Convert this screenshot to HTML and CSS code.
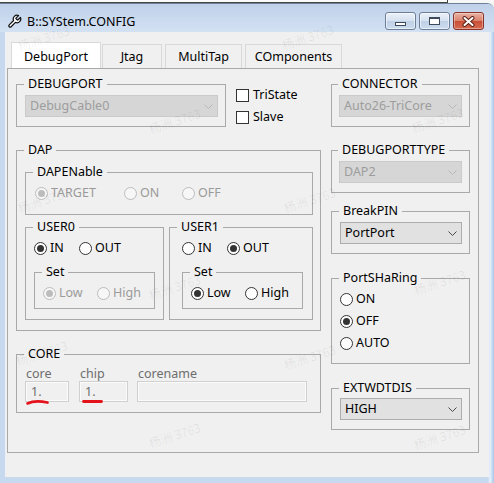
FILE: index.html
```html
<!DOCTYPE html>
<html lang="en">
<head>
<meta charset="utf-8">
<title>B::SYStem.CONFIG</title>
<link rel="stylesheet" href="styles.css">
</head>
<body>
<div class="screen">
  <div class="behind"><div class="behind-edge"></div></div>
  <div class="window">
    <div class="titlebar">
      <svg class="app-icon" width="15" height="15" viewBox="0 0 24 24"><path d="M14.7 6.3a1 1 0 0 0 0 1.4l1.6 1.6a1 1 0 0 0 1.4 0l3.77-3.77a6 6 0 0 1-7.940 7.94l-6.91 6.91a2.12 2.12 0 0 1-3-3l6.91-6.91a6 6 0 0 1 7.94-7.94l-3.76 3.76z" fill="#fff" stroke="#111" stroke-width="2" stroke-linejoin="round"/></svg>
      <span class="title">B::SYStem.CONFIG</span>
      <div class="caption">
        <div class="cbtn"><span class="g-min"></span></div>
        <div class="cbtn"><span class="g-max"></span></div>
        <div class="cbtn close"><svg width="13" height="11" viewBox="0 0 13 11"><path d="M2.5 2 L10.5 9 M10.5 2 L2.5 9" stroke="#5a2218" stroke-width="4" stroke-linecap="round"/><path d="M2.5 2 L10.5 9 M10.5 2 L2.5 9" stroke="#fff" stroke-width="2" stroke-linecap="round"/></svg></div>
      </div>
    </div>
    <div class="client">
      <div class="tabs">
        <div class="tab active w-debug">DebugPort</div>
        <div class="tab w-jtag">Jtag</div>
        <div class="tab w-multi">MultiTap</div>
        <div class="tab w-comp">COmponents</div>
      </div>
      <div class="panel">
        <div class="col-left">
          <div class="row-top">
            <fieldset class="group g-debugport">
              <legend>DEBUGPORT</legend>
              <div class="combo disabled"><span>DebugCable0</span><svg class="chev" width="9" height="5" viewBox="0 0 9 5"><polyline points="0.5,0.5 4.5,4.5 8.5,0.5" fill="none" stroke="currentColor" stroke-width="1"/></svg></div>
            </fieldset>
            <div class="checks">
              <div class="check"><span class="box"></span>TriState</div>
              <div class="check"><span class="box"></span>Slave</div>
            </div>
          </div>

          <fieldset class="group g-dap">
            <legend>DAP</legend>
            <fieldset class="group g-dapenable">
              <legend>DAPENable</legend>
              <div class="radios indent1">
                <div class="radio disabled checked w89"><span class="circle"></span>TARGET</div>
                <div class="radio disabled w58"><span class="circle"></span>ON</div>
                <div class="radio disabled"><span class="circle"></span>OFF</div>
              </div>
            </fieldset>
            <div class="user-row">
              <fieldset class="group g-user g-user0">
                <legend>USER0</legend>
                <div class="radios">
                  <div class="radio checked w45"><span class="circle"></span>IN</div>
                  <div class="radio"><span class="circle"></span>OUT</div>
                </div>
                <fieldset class="group set">
                  <legend>Set</legend>
                  <div class="radios">
                    <div class="radio disabled checked w54"><span class="circle"></span>Low</div>
                    <div class="radio disabled"><span class="circle"></span>High</div>
                  </div>
                </fieldset>
              </fieldset>
              <fieldset class="group g-user g-user1">
                <legend>USER1</legend>
                <div class="user1-body">
                  <div class="radios">
                    <div class="radio w45"><span class="circle"></span>IN</div>
                    <div class="radio checked"><span class="circle"></span>OUT</div>
                  </div>
                  <fieldset class="group set">
                    <legend>Set</legend>
                    <div class="radios">
                      <div class="radio checked w54"><span class="circle"></span>Low</div>
                      <div class="radio"><span class="circle"></span>High</div>
                    </div>
                  </fieldset>
                </div>
              </fieldset>
            </div>
          </fieldset>

          <fieldset class="group g-core">
            <legend>CORE</legend>
            <div class="fields">
              <div class="field f-core">
                <span class="field-label">core</span>
                <div class="edit">1.</div>
                <svg class="mark mark-core" width="24" height="6" viewBox="0 0 24 6"><path d="M1.5 4.5 Q 9 0.8 21.5 3.6" fill="none" stroke="#e3121b" stroke-width="2.6" stroke-linecap="round"/></svg>
              </div>
              <div class="field f-chip">
                <span class="field-label">chip</span>
                <div class="edit">1.</div>
                <svg class="mark mark-chip" width="21" height="5" viewBox="0 0 21 5"><path d="M1.5 2.5 L19.5 2.5" fill="none" stroke="#e3121b" stroke-width="2.8" stroke-linecap="round"/></svg>
              </div>
              <div class="field f-name">
                <span class="field-label">corename</span>
                <div class="edit"></div>
              </div>
            </div>
          </fieldset>
        </div>

        <div class="col-right">
          <fieldset class="group g-connector">
            <legend>CONNECTOR</legend>
            <div class="combo disabled"><span>Auto26-TriCore</span><svg class="chev" width="9" height="5" viewBox="0 0 9 5"><polyline points="0.5,0.5 4.5,4.5 8.5,0.5" fill="none" stroke="currentColor" stroke-width="1"/></svg></div>
          </fieldset>
          <fieldset class="group g-dptype">
            <legend>DEBUGPORTTYPE</legend>
            <div class="combo disabled"><span>DAP2</span><svg class="chev" width="9" height="5" viewBox="0 0 9 5"><polyline points="0.5,0.5 4.5,4.5 8.5,0.5" fill="none" stroke="currentColor" stroke-width="1"/></svg></div>
          </fieldset>
          <fieldset class="group g-breakpin">
            <legend>BreakPIN</legend>
            <div class="combo"><span>PortPort</span><svg class="chev" width="9" height="5" viewBox="0 0 9 5"><polyline points="0.5,0.5 4.5,4.5 8.5,0.5" fill="none" stroke="currentColor" stroke-width="1"/></svg></div>
          </fieldset>
          <fieldset class="group g-share">
            <legend>PortSHaRing</legend>
            <div class="radio-col">
              <div class="radio"><span class="circle"></span>ON</div>
              <div class="radio checked"><span class="circle"></span>OFF</div>
              <div class="radio"><span class="circle"></span>AUTO</div>
            </div>
          </fieldset>
          <fieldset class="group g-ext">
            <legend>EXTWDTDIS</legend>
            <div class="combo"><span>HIGH</span><svg class="chev" width="9" height="5" viewBox="0 0 9 5"><polyline points="0.5,0.5 4.5,4.5 8.5,0.5" fill="none" stroke="currentColor" stroke-width="1"/></svg></div>
          </fieldset>
        </div>
      </div>
    </div>
  </div>

  <div class="wm-layer" aria-hidden="true">
    <span class="wm wm1">杨洲 3763</span>
    <span class="wm wm2">杨洲 3763</span>
    <span class="wm wm3">杨洲 3763</span>
    <span class="wm wm4">杨洲 3763</span>
    <span class="wm wm5">杨洲 3763</span>
    <span class="wm wm6">杨洲 3763</span>
    <span class="wm wm7">杨洲 3763</span>
    <span class="wm wm8">杨洲 3763</span>
    <span class="wm wm9">杨洲 3763</span>
    <span class="wm wm10">杨洲 3763</span>
    <span class="wm wm11">杨洲 3763</span>
    <span class="wm wm12">杨洲 3763</span>
  </div>
</div>
</body>
</html>
```
FILE: styles.css
```css
* { box-sizing: border-box; }
html, body { margin: 0; padding: 0; }
body {
  width: 494px; height: 483px; overflow: hidden;
  background: #f4f4f4;
  font-family: "Noto Sans", "Open Sans", "DejaVu Sans", sans-serif;
  font-size: 12.5px; line-height: 16px; color: #000;
}
.screen { position: relative; width: 494px; height: 483px; display: flex; flex-direction: column; }

.behind { height: 3px; flex: none; background: #f7f7f7; }
.behind-edge { width: 448px; height: 3px; border-bottom: 1px solid #444; border-right: 1px solid #444; background: #fafafa; }

.window {
  flex: 1; display: flex; flex-direction: column;
  border-top: 1px solid #6e8098;
  border-top-right-radius: 7px;
  background: linear-gradient(90deg, #c7d9ee 0, #c7d9ee 488px, #eaf2fb 490px, #a7c6e8 494px);
}

.titlebar {
  height: 28px; flex: none; display: flex; align-items: flex-start;
  background: linear-gradient(#bfd1ea, #d3e1f2);
  border-top-right-radius: 6px;
}
.app-icon { margin: 10px 0 0 7px; flex: none; }
.title { margin: 10px 0 0 5px; white-space: nowrap; }
.caption { margin: 8px 10px 0 auto; display: flex; gap: 3px; }
.cbtn {
  width: 31px; height: 18px; border: 1px solid #6d7f98; border-radius: 3px;
  background: linear-gradient(#ebf1f9 0%, #d6e2f0 48%, #bfd1e7 52%, #cddcee 100%);
  box-shadow: inset 0 0 0 1px rgba(255,255,255,.55);
  display: flex; align-items: center; justify-content: center;
}
.cbtn.close {
  border-color: #8a3427;
  background: linear-gradient(#ebb2a4 0%, #da836d 48%, #c94f37 52%, #d66b52 100%);
  box-shadow: inset 0 0 0 1px rgba(255,255,255,.35);
}
.g-min { width: 11px; height: 4px; border: 1px solid #3f4a5b; background: #fff; margin-top: 6px; }
.g-max { width: 11px; height: 8px; border: 1px solid #3f4a5b; border-top-width: 2px; background: #fff; }

.client {
  flex: 1; margin: 0 5px 6px; background: #f0f0f0;
  padding: 10px 10px 24px 2px; display: flex; flex-direction: column;
}

.tabs { display: flex; align-items: flex-end; height: 26px; margin-left: 4px; flex: none; }
.tab {
  height: 24px; border: 1px solid #d9d9d9; border-bottom: none; background: #f0f0f0;
  text-align: center; padding-top: 4px; margin-right: 3px; white-space: nowrap;
}
.tab.active { height: 26px; background: #fff; padding-top: 6px; margin-right: 1px; }
.w-debug { width: 90px; }
.w-jtag { width: 60px; }
.w-multi { width: 77px; }
.w-comp { width: 97px; }

.panel { flex: 1; border: 1px solid #a9a9a9; display: flex; gap: 10px; padding: 8px; }
.col-left { width: 305px; flex: none; display: flex; flex-direction: column; }
.col-right { width: 139px; flex: none; display: flex; flex-direction: column; }

.group { margin: 0; border: 1px solid #a9a9a9; padding: 0 7px 0 8px; min-width: 0; }
.group > legend { padding: 0 4px; margin-left: -1px; line-height: 14px; height: 14px; white-space: nowrap; }

.row-top { display: flex; }
.g-debugport { width: 210px; height: 50px; padding-top: 4px; }
.checks { margin-left: 10px; padding-top: 10px; display: flex; flex-direction: column; gap: 6px; }
.check { display: flex; align-items: center; height: 16px; }
.box { width: 13px; height: 13px; border: 1px solid #333; background: #fff; margin-right: 4px; flex: none; }

.g-dap { height: 188px; margin-top: 16px; padding-top: 8px; }
.g-dapenable { height: 50px; padding-top: 6px; }
.radios { display: flex; align-items: center; height: 16px; }
.indent1 { padding-left: 1px; }
.radio { display: flex; align-items: center; height: 16px; white-space: nowrap; }
.circle {
  width: 13px; height: 13px; border: 1px solid #333; border-radius: 50%; background: #fff;
  margin-right: 3px; flex: none; display: flex; align-items: center; justify-content: center;
}
.radio.checked .circle::after { content: ""; width: 7px; height: 7px; border-radius: 50%; background: #333; }
.radio.disabled { color: #9a9a9a; }
.radio.disabled .circle { border-color: #bcbcbc; background: #f7f7f7; }
.radio.disabled.checked .circle::after { background: #bcbcbc; }
.w89 { width: 89px; }
.w58 { width: 58px; }
.w45 { width: 45px; }
.w54 { width: 54px; }

.user-row { display: flex; gap: 5px; margin-top: 5px; }
.g-user { height: 100px; padding-top: 6px; }
.g-user0 { width: 139px; }
.g-user1 { width: 144px; }
.user1-body { margin-left: 4px; }
.set { margin-top: 9px; width: 121px; height: 44px; padding-top: 6px; }

.g-core { height: 66px; margin-top: 16px; padding-top: 5px; }
.fields { display: flex; }
.field { display: flex; flex-direction: column; position: relative; }
.field-label { line-height: 15px; height: 15px; color: #6d6d6d; padding-left: 1px; }
.edit {
  height: 21px; border: 1px solid #d0d0d0; background: #f0f0f0; color: #6d6d6d;
  box-shadow: inset 0 0 0 1px #fbfbfb; padding-left: 5px; line-height: 19px;
}
.f-core { width: 44px; }
.f-chip { width: 49px; margin-left: 10px; }
.f-name { width: 170px; margin-left: 9px; }
.mark { position: absolute; }
.mark-core { left: 1px; top: 33px; }
.mark-chip { left: 3px; top: 33px; }

.combo {
  height: 22px; border: 1px solid #adadad; background: #e1e1e1; color: #000;
  display: flex; align-items: center; justify-content: space-between;
  padding: 0 4px 0 4px; line-height: 20px; white-space: nowrap;
}
.combo .chev { color: #4a4a4a; flex: none; }
.combo.disabled { background: #d6d6d6; border-color: #cacaca; color: #9d9d9d; }
.combo.disabled .chev { color: #b8b8b8; }

.g-connector { height: 50px; padding-top: 4px; padding-left: 7px; }
.g-dptype { height: 50px; margin-top: 16px; padding-top: 4px; padding-left: 7px; }
.g-breakpin { height: 50px; margin-top: 11px; padding-top: 4px; }
.g-share { height: 93px; margin-top: 17px; padding-top: 3px; }
.radio-col { display: flex; flex-direction: column; }
.radio-col .radio { height: 22px; }
.g-ext { height: 49px; margin-top: 17px; padding-top: 3px; }

.wm-layer { position: absolute; left: 0; top: 0; width: 494px; height: 483px; pointer-events: none; }
.wm {
  position: absolute; font-family: "Noto Sans CJK SC", "Noto Sans", sans-serif; font-size: 12px;
  line-height: 14px; color: rgba(0,0,0,.07); transform: rotate(-18deg); white-space: nowrap;
}
.wm1 { left: 17px; top: 31px; }
.wm2 { left: 281px; top: 30px; }
.wm3 { left: 148px; top: 114px; }
.wm4 { left: 411px; top: 113px; }
.wm5 { left: 17px; top: 193px; }
.wm6 { left: 283px; top: 193px; }
.wm7 { left: 148px; top: 280px; }
.wm8 { left: 413px; top: 275px; }
.wm9 { left: 15px; top: 346px; }
.wm10 { left: 283px; top: 350px; }
.wm11 { left: 148px; top: 428px; }
.wm12 { left: 413px; top: 430px; }
```
